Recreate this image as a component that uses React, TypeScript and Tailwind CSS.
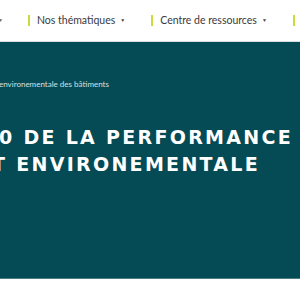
export default function App() {
  return (
    <div className="w-[300px] h-[300px] overflow-hidden bg-white relative" style={{ fontFamily: '"Lato", sans-serif' }}>
      <div className="h-[42px] border-b border-[#d9dede] flex items-center text-[10.5px] text-[#3a3a3a] whitespace-nowrap">
        <span className="shrink-0 text-[5px] text-[#666] ml-[-2px] w-[30px]">▼</span>
        <div className="shrink-0 w-[2px] h-[11px] bg-[#c9dc3a]" />
        <span className="shrink-0 ml-[7px]">Nos thématiques</span>
        <span className="shrink-0 text-[5px] ml-[5px] text-[#444]">▼</span>
        <div className="shrink-0 w-[2px] h-[11px] bg-[#c9dc3a] ml-[26px]" />
        <span className="shrink-0 ml-[7px]">Centre de ressources</span>
        <span className="shrink-0 text-[5px] ml-[5px] text-[#444]">▼</span>
        <div className="shrink-0 w-[2px] h-[11px] bg-[#c9dc3a] ml-[26px]" />
      </div>
      <div className="h-[237px] bg-[#044b55] border-b border-[#4d7d84] overflow-hidden whitespace-nowrap">
        <div className="pt-[36px] text-[8px] text-[#d6e0e0] ml-[-1px]">environementale des bâtiments</div>
        <div className="mt-[34px] text-[19px] font-bold text-white tracking-[2.3px] leading-[27px]" style={{ fontFamily: '"DejaVu Sans", sans-serif' }}>
          <div className="ml-[-1px]">0 DE LA PERFORMANCE</div>
          <div className="ml-[-8px]">T ENVIRONEMENTALE</div>
        </div>
      </div>
    </div>
  );
}
